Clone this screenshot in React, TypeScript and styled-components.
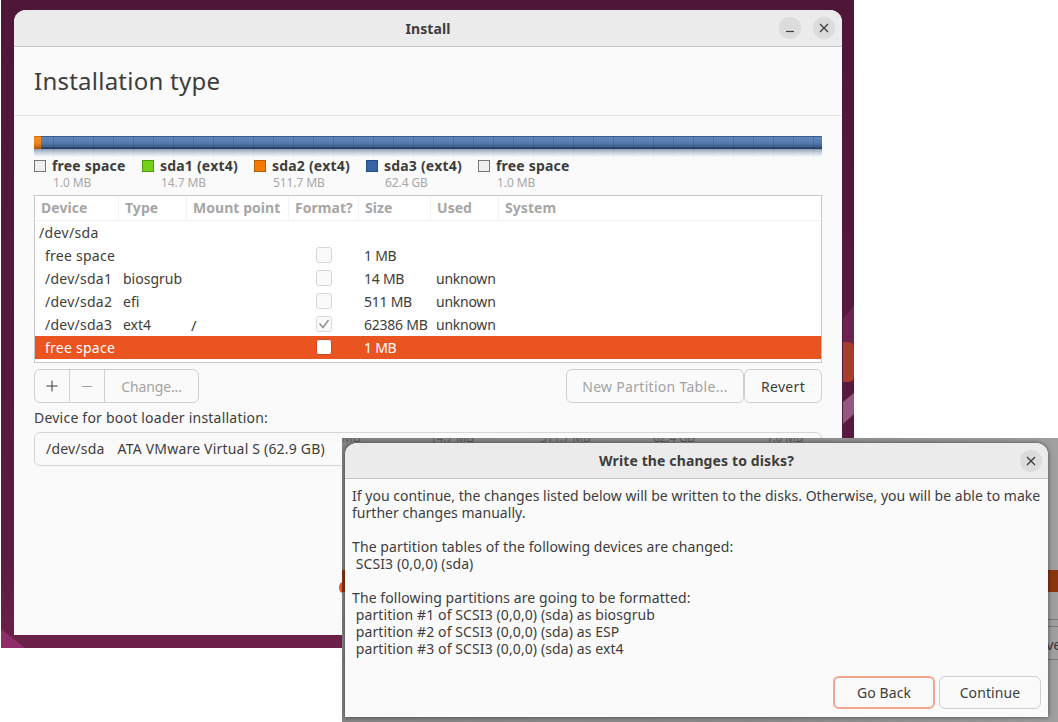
import styled, { createGlobalStyle } from "styled-components";

const GlobalStyle = createGlobalStyle`
  html, body {
    margin: 0;
    padding: 0;
    background: #fff;
  }
  * {
    box-sizing: border-box;
  }
`;

const uiFont = `"Noto Sans", "Open Sans", sans-serif`;

const Canvas = styled.div`
  position: relative;
  width: 1058px;
  height: 722px;
  overflow: hidden;
  background: #fff;
  font-family: ${uiFont};
  font-size: 14px;
  letter-spacing: -0.25px;
  color: #3d3d3d;
`;

const Desktop = styled.div`
  position: absolute;
  left: 1px;
  top: 0;
  width: 853px;
  height: 648px;
  padding: 10px 12px 13px 13px;
  background: linear-gradient(180deg, #4e1637 0%, #5a1b40 85%, #6c2148 100%);
`;

const Wallpaper = styled.svg`
  position: absolute;
  left: 0;
  top: 0;
`;

const Window = styled.div`
  position: relative;
  display: flex;
  flex-direction: column;
  height: 100%;
  background: #fafafa;
  border-radius: 12px 12px 0 0;
`;

const TitleBar = styled.div<{ $height: number }>`
  position: relative;
  flex: none;
  display: flex;
  align-items: center;
  justify-content: center;
  height: ${(p) => p.$height}px;
  background: #ebebeb;
  border-bottom: 1px solid #c4c4c4;
  border-radius: 12px 12px 0 0;
`;

const TitleText = styled.div`
  font-weight: 700;
  font-size: 14px;
  letter-spacing: 0.12px;
`;

const TitleButtons = styled.div`
  position: absolute;
  right: 7px;
  top: 7px;
  display: flex;
  gap: 12px;
`;

const RoundButton = styled.div`
  display: flex;
  align-items: center;
  justify-content: center;
  width: 22px;
  height: 22px;
  border-radius: 50%;
  background: #dcdcdc;
`;

const PageHeader = styled.div`
  flex: none;
  display: flex;
  align-items: center;
  height: 69px;
  padding: 0 20px 2px;
  border-bottom: 1px solid #e2e2e2;
  font-size: 24px;
  letter-spacing: 0.24px;
  font-weight: 400;
`;

const Content = styled.div`
  display: flex;
  flex-direction: column;
  padding: 20px 20px 0;
`;

const ticks = (alpha: number) => `repeating-linear-gradient(
  90deg,
  transparent 0,
  transparent 19px,
  rgba(20, 40, 70, ${alpha}) 19px,
  rgba(20, 40, 70, ${alpha}) 20px
)`;

const Bar = styled.div`
  position: relative;
  display: flex;
  height: 13px;
  &::after {
    content: "";
    position: absolute;
    inset: 0;
    background: ${ticks(0.18)};
  }
`;

const BarPart = styled.div<{ $tone: "orange" | "blue"; $grow?: boolean }>`
  flex: ${(p) => (p.$grow ? "1" : "0 0 7px")};
  background: ${(p) =>
    p.$tone === "orange"
      ? "linear-gradient(180deg, #c76a10 0, #f08a24 12%, #ef8520 55%, #a85808 100%)"
      : "linear-gradient(180deg, #2b4c7b 0, #6286b6 12%, #5379ac 55%, #416391 78%, #1c3354 100%)"};
`;

const BarShade = styled.div`
  height: 8px;
  background:
    ${ticks(0.05)},
    linear-gradient(180deg, #8d9fb8 0, #c6cfdb 45%, #fafafa 100%);
`;

const Legend = styled.div`
  display: grid;
  grid-template-columns: 108px 112px 112px 112px auto;
  height: 31px;
  margin: 2px 0 5px;
`;

const LegendItem = styled.div`
  display: flex;
  gap: 6px;
`;

const Swatch = styled.div<{ $fill: string; $edge: string }>`
  flex: none;
  width: 12px;
  height: 12px;
  margin-top: 1px;
  background: ${(p) => p.$fill};
  border: 1px solid ${(p) => p.$edge};
`;

const LegendText = styled.div`
  display: flex;
  flex-direction: column;
  margin-top: -1px;
`;

const LegendName = styled.div`
  font-weight: 700;
  font-size: 14px;
  line-height: 15px;
  letter-spacing: 0.2px;
`;

const LegendSize = styled.div`
  margin-top: 2px;
  font-size: 12px;
  line-height: 15px;
  padding-left: 1px;
  letter-spacing: -0.1px;
  color: #a8a8a8;
`;

const Table = styled.div`
  height: 168px;
  background: #fff;
  border: 1px solid #c8c8c8;
`;

const columns = `84px 68px 102px 70px 72px 68px 1fr`;

const HeadRow = styled.div`
  display: grid;
  grid-template-columns: ${columns};
  height: 25px;
  border-bottom: 1px solid #f1f1f1;
`;

const HeadCell = styled.div`
  display: flex;
  align-items: center;
  padding: 0 0 2px 6px;
  font-weight: 700;
  font-size: 14px;
  letter-spacing: 0.05px;
  color: #a6a6a6;
  border-right: 1px solid #f3f3f3;
  &:last-child {
    border-right: none;
  }
`;

const Row = styled.div<{ $selected?: boolean }>`
  display: grid;
  grid-template-columns: ${columns};
  align-items: center;
  height: 23px;
  background: ${(p) => (p.$selected ? "#e95420" : "transparent")};
  color: ${(p) => (p.$selected ? "#fff" : "#3d3d3d")};
`;

const DiskRow = styled.div`
  display: flex;
  align-items: center;
  height: 23px;
  padding-left: 4px;
  letter-spacing: 0.35px;
`;

const Cell = styled.div<{ $pad?: number; $ls?: number }>`
  padding-left: ${(p) => p.$pad ?? 5}px;
  letter-spacing: ${(p) => p.$ls ?? -0.25}px;
  white-space: nowrap;
`;

const MountCell = styled(Cell)`
  font-size: 15px;
`;

const BoxCell = styled.div`
  display: flex;
  justify-content: center;
  margin-top: -1px;
`;

const CheckBox = styled.div<{ $selected?: boolean }>`
  display: flex;
  align-items: center;
  justify-content: center;
  width: 16px;
  height: 16px;
  border-radius: 3px;
  background: ${(p) => (p.$selected ? "#fff" : "#fafafa")};
  border: 1px solid ${(p) => (p.$selected ? "#c84a1c" : "#d6d6d6")};
`;

const ButtonRow = styled.div`
  display: flex;
  justify-content: space-between;
  margin-top: 6px;
`;

const ButtonGroup = styled.div`
  display: flex;
`;

const Button = styled.div<{
  $w: number;
  $ls?: number;
  $disabled?: boolean;
  $joined?: "left" | "middle" | "right";
}>`
  display: flex;
  align-items: center;
  justify-content: center;
  width: ${(p) => p.$w}px;
  height: 34px;
  background: #fafafa;
  border: 1px solid #cfcfcf;
  letter-spacing: ${(p) => p.$ls ?? 0.3}px;
  margin-left: ${(p) => (p.$joined && p.$joined !== "left" ? "-1px" : "0")};
  border-radius: ${(p) =>
    p.$joined === "left"
      ? "6px 0 0 6px"
      : p.$joined === "middle"
        ? "0"
        : p.$joined === "right"
          ? "0 6px 6px 0"
          : "6px"};
  color: ${(p) => (p.$disabled ? "#a3a3a3" : "#3d3d3d")};
`;

const DeviceLabel = styled.div`
  margin-top: 6px;
  height: 23px;
  line-height: 18px;
  letter-spacing: 0.22px;
`;

const DeviceSelect = styled.div`
  display: flex;
  gap: 13px;
  align-items: center;
  height: 34px;
  padding: 0 0 2px 11px;
  background: #fafafa;
  border: 1px solid #d6d6d6;
  border-radius: 6px;
  letter-spacing: 0.2px;
`;

const SideMark = styled.div`
  position: absolute;
  left: 339px;
  top: 582px;
  width: 8px;
  height: 11px;
  border-radius: 50%;
  background: #e95420;
`;

const DialogShot = styled.div`
  position: absolute;
  left: 342px;
  top: 438px;
  width: 716px;
  height: 284px;
  padding: 5px 10px 5px 3px;
  overflow: hidden;
  background: linear-gradient(90deg, #868686 0, #8e8e8e 60%, #9f9f9f 100%);
`;

const Ghost = styled.div`
  position: absolute;
  color: #3a3a3a;
  font-size: 12px;
  white-space: nowrap;
`;

const GhostStrip = styled(Ghost)`
  left: 0;
  top: -9px;
  display: flex;
  color: #5d5d5d;
`;

const GhostTail = styled(Ghost)`
  left: 704px;
  top: 196px;
  font-size: 15px;
`;

const GhostSize = styled.span<{ $w: number }>`
  width: ${(p) => p.$w}px;
`;

const GhostBand = styled.div`
  position: absolute;
  left: 0;
  right: 0;
  top: 132px;
  height: 22px;
  background: #8a3510;
`;

const GhostLine = styled.div<{ $top: number }>`
  position: absolute;
  left: 0;
  right: 0;
  top: ${(p) => p.$top}px;
  height: 1px;
  background: #777;
`;

const Dialog = styled.div`
  position: relative;
  display: flex;
  flex-direction: column;
  height: 100%;
  background: #fafafa;
  border-radius: 12px 12px 0 0;
  box-shadow: 0 0 5px rgba(0, 0, 0, 0.55);
`;

const DialogClose = styled.div`
  position: absolute;
  right: 6px;
  top: 7px;
`;

const DialogBody = styled.div`
  flex: 1;
  padding: 8px 0 0 7px;
  font-size: 14px;
  line-height: 17px;
  white-space: pre-wrap;
  letter-spacing: 0.1px;
`;

const DialogIntro = styled.div`
  letter-spacing: 0.03px;
`;

const DialogFooter = styled.div`
  display: flex;
  justify-content: flex-end;
  gap: 4px;
  padding: 0 7px 8px 0;
`;

const DialogButton = styled.div<{ $focus?: boolean }>`
  display: flex;
  align-items: center;
  justify-content: center;
  width: 102px;
  height: 33px;
  border-radius: 6px;
  background: #fafafa;
  letter-spacing: 0.1px;
  border: ${(p) => (p.$focus ? "2px solid #f0a58c" : "1px solid #cfcfcf")};
`;

const rows = [
  { device: "free space", type: "", mount: "", size: "1 MB", used: "" },
  { device: "/dev/sda1", type: "biosgrub", mount: "", size: "14 MB", used: "unknown" },
  { device: "/dev/sda2", type: "efi", mount: "", size: "511 MB", used: "unknown" },
  { device: "/dev/sda3", type: "ext4", mount: "/", size: "62386 MB", used: "unknown", checked: true },
  { device: "free space", type: "", mount: "", size: "1 MB", used: "", selected: true },
];

const legend = [
  { name: "free space", size: "1.0 MB", fill: "#f0f0f0", edge: "#767676" },
  { name: "sda1 (ext4)", size: "14.7 MB", fill: "#73d216", edge: "#4f9a0c" },
  { name: "sda2 (ext4)", size: "511.7 MB", fill: "#f57900", edge: "#b85c08" },
  { name: "sda3 (ext4)", size: "62.4 GB", fill: "#3465a4", edge: "#204a87" },
  { name: "free space", size: "1.0 MB", fill: "#f0f0f0", edge: "#767676" },
];

const headers = ["Device", "Type", "Mount point", "Format?", "Size", "Used", "System"];

const dialogText = `
The partition tables of the following devices are changed:
 SCSI3 (0,0,0) (sda)

The following partitions are going to be formatted:
 partition #1 of SCSI3 (0,0,0) (sda) as biosgrub
 partition #2 of SCSI3 (0,0,0) (sda) as ESP
 partition #3 of SCSI3 (0,0,0) (sda) as ext4`;

const CloseIcon = () => (
  <svg width="10" height="10" viewBox="0 0 10 10">
    <path d="M1 1 9 9M9 1 1 9" stroke="#3d3d3d" strokeWidth="1.3" fill="none" />
  </svg>
);

const MinimizeIcon = () => (
  <svg width="10" height="10" viewBox="0 0 10 10">
    <path d="M1 8.5H9" stroke="#3d3d3d" strokeWidth="1.2" fill="none" />
  </svg>
);

const PlusIcon = () => (
  <svg width="12" height="12" viewBox="0 0 12 12">
    <path d="M6 0.5V11.5M0.5 6H11.5" stroke="#3d3d3d" strokeWidth="1" fill="none" />
  </svg>
);

const MinusIcon = () => (
  <svg width="12" height="12" viewBox="0 0 12 12">
    <path d="M1 6.5H11" stroke="#a3a3a3" strokeWidth="1" fill="none" />
  </svg>
);

const CheckIcon = () => (
  <svg width="12" height="12" viewBox="0 0 12 12">
    <path d="M1.5 5.5 5 9.5 10.5 2" stroke="#8f8f8f" strokeWidth="1.5" fill="none" />
  </svg>
);

export default function App() {
  return (
    <Canvas>
      <GlobalStyle />
      <Desktop>
        <Wallpaper width="853" height="648" viewBox="0 0 853 648">
          <path d="M842 318 853 306V350H842Z" fill="#6b2450" />
          <path d="M842 342H847Q853 342 853 348V376Q853 382 847 382H842Z" fill="#a83d2c" />
          <path d="M842 402 853 393V414L842 424Z" fill="#94597f" />
          <path d="M0 629 24 648H0Z" fill="#8f2d68" />
        </Wallpaper>
        <Window>
          <TitleBar $height={37}>
            <TitleText>Install</TitleText>
            <TitleButtons>
              <RoundButton>
                <MinimizeIcon />
              </RoundButton>
              <RoundButton>
                <CloseIcon />
              </RoundButton>
            </TitleButtons>
          </TitleBar>
          <PageHeader>Installation type</PageHeader>
          <Content>
            <Bar>
              <BarPart $tone="orange" />
              <BarPart $tone="blue" $grow />
            </Bar>
            <BarShade />
            <Legend>
              {legend.map((el, i) => (
                <LegendItem key={i}>
                  <Swatch $fill={el.fill} $edge={el.edge} />
                  <LegendText>
                    <LegendName>{el.name}</LegendName>
                    <LegendSize>{el.size}</LegendSize>
                  </LegendText>
                </LegendItem>
              ))}
            </Legend>
            <Table>
              <HeadRow>
                {headers.map((el) => (
                  <HeadCell key={el}>{el}</HeadCell>
                ))}
              </HeadRow>
              <DiskRow>/dev/sda</DiskRow>
              {rows.map((el, i) => (
                <Row key={i} $selected={el.selected}>
                  <Cell $pad={10} $ls={0.25}>
                    {el.device}
                  </Cell>
                  <Cell $pad={4} $ls={0}>
                    {el.type}
                  </Cell>
                  <MountCell $pad={4}>{el.mount}</MountCell>
                  <BoxCell>
                    <CheckBox $selected={el.selected}>{el.checked && <CheckIcon />}</CheckBox>
                  </BoxCell>
                  <Cell>{el.size}</Cell>
                  <Cell>{el.used}</Cell>
                </Row>
              ))}
            </Table>
            <ButtonRow>
              <ButtonGroup>
                <Button $w={36} $joined="left">
                  <PlusIcon />
                </Button>
                <Button $w={36} $joined="middle" $disabled>
                  <MinusIcon />
                </Button>
                <Button $w={95} $joined="right" $ls={-0.15} $disabled>
                  Change...
                </Button>
              </ButtonGroup>
              <ButtonGroup>
                <Button $w={178} $disabled>
                  New Partition Table...
                </Button>
                <Button $w={78}>Revert</Button>
              </ButtonGroup>
            </ButtonRow>
            <DeviceLabel>Device for boot loader installation:</DeviceLabel>
            <DeviceSelect>
              <span>/dev/sda</span>
              <span>ATA VMware Virtual S (62.9 GB)</span>
            </DeviceSelect>
          </Content>
        </Window>
      </Desktop>
      <SideMark />
      <DialogShot>
        <GhostStrip>
          <GhostSize $w={88}>MB</GhostSize>
          <GhostSize $w={110}>14.7 MB</GhostSize>
          <GhostSize $w={113}>511.7 MB</GhostSize>
          <GhostSize $w={113}>62.4 GB</GhostSize>
          <GhostSize $w={60}>1.0 MB</GhostSize>
        </GhostStrip>
        <GhostBand />
        <GhostLine $top={181} />
        <GhostLine $top={188} />
        <GhostLine $top={221} />
        <GhostTail>ve</GhostTail>
        <Dialog>
          <TitleBar $height={36}>
            <TitleText>Write the changes to disks?</TitleText>
            <DialogClose>
              <RoundButton>
                <CloseIcon />
              </RoundButton>
            </DialogClose>
          </TitleBar>
          <DialogBody>
            <DialogIntro>
              {`If you continue, the changes listed below will be written to the disks. Otherwise, you will be able to make
further changes manually.
`}
            </DialogIntro>
            {dialogText}
          </DialogBody>
          <DialogFooter>
            <DialogButton $focus>Go Back</DialogButton>
            <DialogButton>Continue</DialogButton>
          </DialogFooter>
        </Dialog>
      </DialogShot>
    </Canvas>
  );
}
